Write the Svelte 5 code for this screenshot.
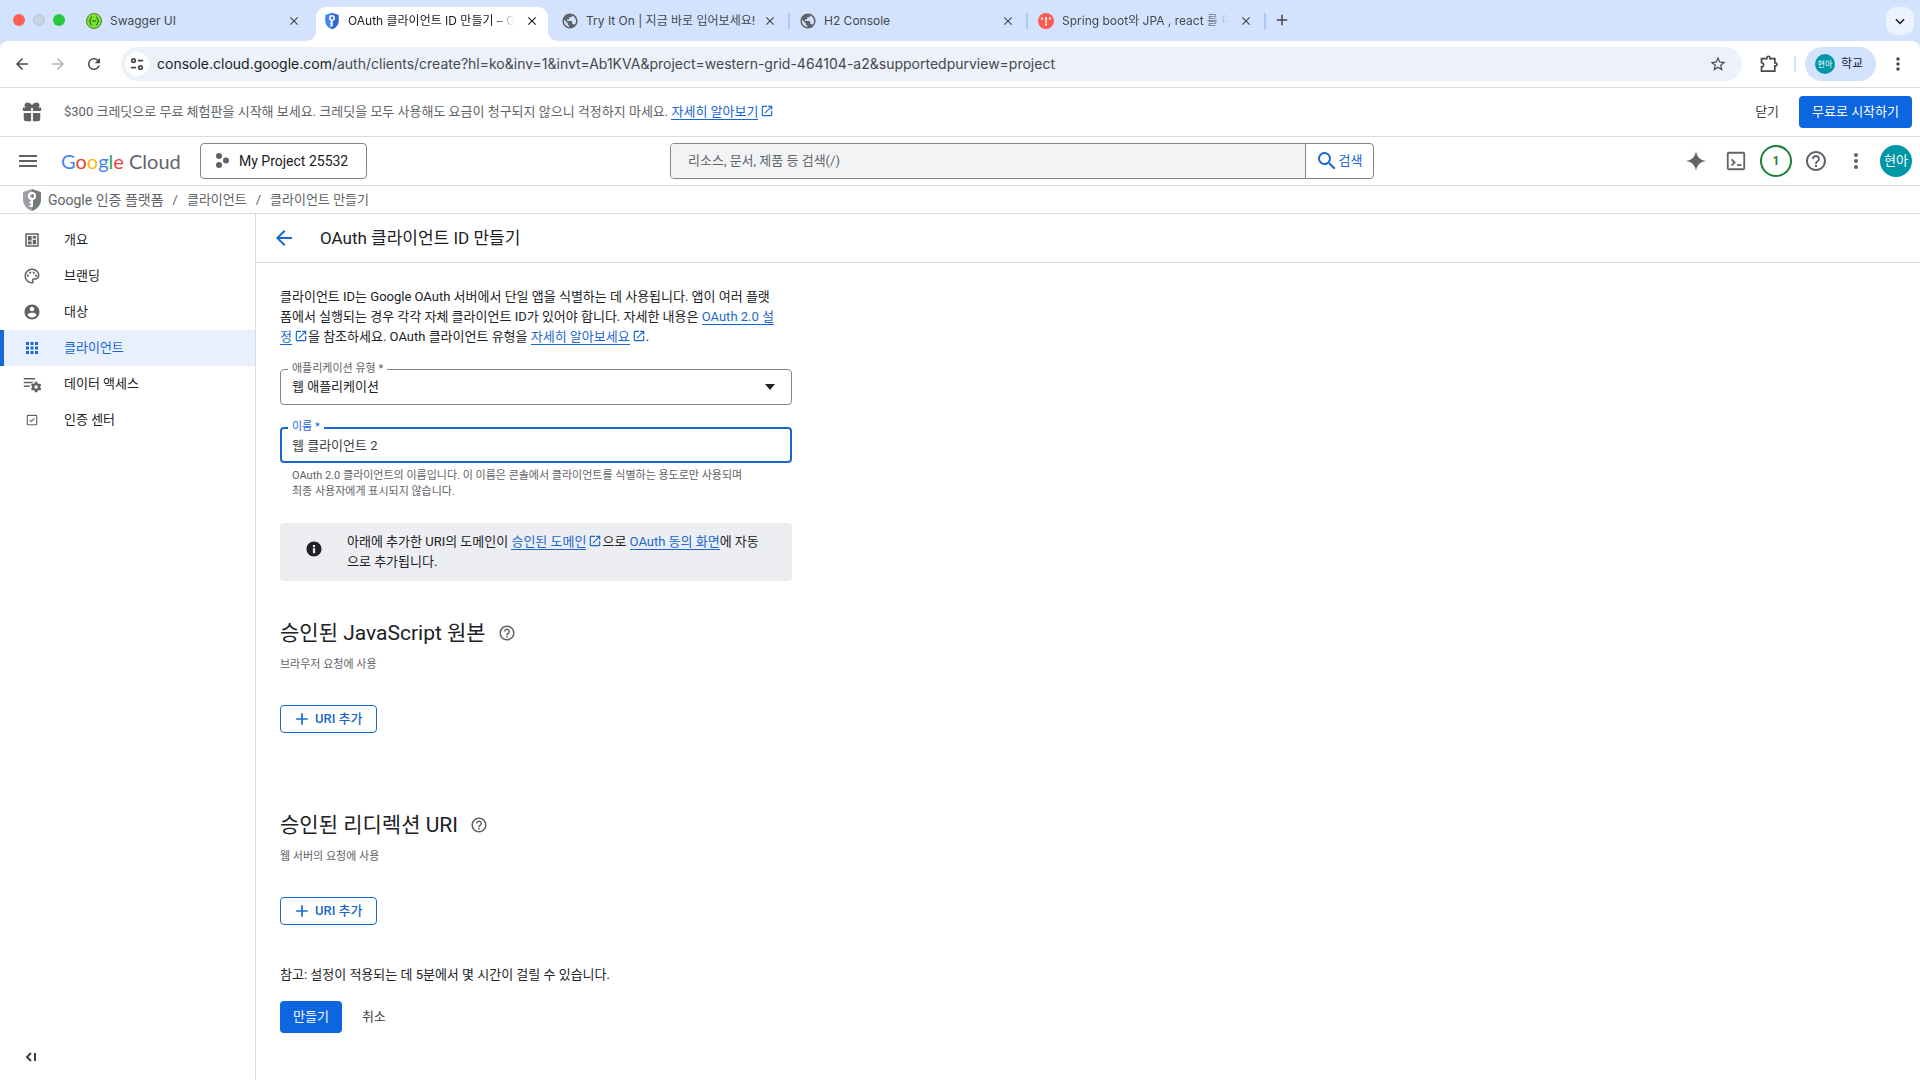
<script>
  const ICONS = {
    back: 'M20 11H7.83l5.59-5.59L12 4l-8 8 8 8 1.41-1.41L7.83 13H20v-2z',
    forward: 'M4 11h12.17l-5.59-5.59L12 4l8 8-8 8-1.41-1.41L16.17 13H4v-2z',
    reload: 'M17.65 6.35A7.96 7.96 0 0 0 12 4a8 8 0 1 0 7.73 10h-2.08A6 6 0 1 1 12 6c1.66 0 3.14.69 4.22 1.78L13 11h7V4l-2.35 2.35z',
    close: 'M19 6.41 17.59 5 12 10.59 6.41 5 5 6.41 10.59 12 5 17.59 6.41 19 12 13.41 17.59 19 19 17.59 13.41 12z',
    add: 'M19 13h-6v6h-2v-6H5v-2h6V5h2v6h6v2z',
    chevron: 'M6 8 12 14l6-6 2 2-8 8-8-8z',
    star: 'M22 9.24l-7.19-.62L12 2 9.19 8.63 2 9.24l5.46 4.73L5.82 21 12 17.27 18.18 21l-1.63-7.03L22 9.24zM12 15.4l-3.76 2.27 1-4.28-3.32-2.88 4.38-.38L12 6.1l1.71 4.04 4.38.38-3.32 2.88 1 4.28L12 15.4z',
    more: 'M12 8c1.1 0 2-.9 2-2s-.9-2-2-2-2 .9-2 2 .9 2 2 2zm0 2c-1.1 0-2 .9-2 2s.9 2 2 2 2-.9 2-2-.9-2-2-2zm0 6c-1.1 0-2 .9-2 2s.9 2 2 2 2-.9 2-2-.9-2-2-2z',
    menu: 'M3 18h18v-2H3v2zm0-5h18v-2H3v2zm0-7v2h18V6H3z',
    search: 'M15.5 14h-.79l-.28-.27A6.47 6.47 0 0 0 16 9.5 6.5 6.5 0 1 0 9.5 16c1.61 0 3.09-.59 4.23-1.57l.27.28v.79l5 4.99L20.49 19l-4.99-5zm-6 0a4.5 4.5 0 1 1 0-9 4.5 4.5 0 0 1 0 9z',
    external: 'M19 19H5V5h7V3H5a2 2 0 0 0-2 2v14a2 2 0 0 0 2 2h14c1.1 0 2-.9 2-2v-7h-2v7zM14 3v2h3.59l-9.83 9.83 1.41 1.41L19 6.41V10h2V3h-7z',
    help: 'M11 18h2v-2h-2v2zm1-16C6.48 2 2 6.48 2 12s4.48 10 10 10 10-4.48 10-10S17.52 2 12 2zm0 18c-4.41 0-8-3.59-8-8s3.59-8 8-8 8 3.59 8 8-3.59 8-8 8zm0-14c-2.21 0-4 1.79-4 4h2c0-1.1.9-2 2-2s2 .9 2 2c0 2-3 1.75-3 5h2c0-2.25 3-2.5 3-5 0-2.21-1.79-4-4-4z',
    info: 'M12 2C6.48 2 2 6.48 2 12s4.48 10 10 10 10-4.48 10-10S17.52 2 12 2zm1.500 15.500h-3V11h3v6.500zm0-8h-3v-3h3v3z',
    globe: 'M12 2C6.48 2 2 6.48 2 12s4.48 10 10 10 10-4.48 10-10S17.52 2 12 2zm-1 17.93c-3.95-.49-7-3.85-7-7.93 0-.62.08-1.21.21-1.79L9 15v1c0 1.1.9 2 2 2v1.93zm6.9-2.54c-.26-.81-1-1.39-1.9-1.39h-1v-3c0-.55-.45-1-1-1H8v-2h2c.55 0 1-.45 1-1V7h2c1.1 0 2-.9 2-2v-.41c2.93 1.19 5 4.06 5 7.41 0 2.08-.8 3.97-2.1 5.39z',
    extension: 'M3 5.500h6.500V4.500a1.800 1.800 0 0 1 3.600 0v1H19v5.200h.7a1.800 1.800 0 0 1 0 3.600H19V20.500H3v-5a2.500 2.500 0 0 0 0-5z',
    gift: 'M2 11V7h3.400A2.800 2.800 0 0 1 8 2c1.700 0 3 1 4 2.600C13 3 14.300 2 16 2a2.800 2.800 0 0 1 2.600 5H22v4h-9V7.500h-2V11zM3 13h8v9H5a2 2 0 0 1-2-2zm10 0h8v7a2 2 0 0 1-2 2h-6z',
    spark: 'M12 0c.9 6.600 4.800 11.100 12 12-7.200.9-11.100 5.400-12 12-.9-6.600-4.800-11.100-12-12 7.200-.9 11.100-5.400 12-12z',
    overview: 'M20 3H4a1 1 0 0 0-1 1v16a1 1 0 0 0 1 1h16a1 1 0 0 0 1-1V4a1 1 0 0 0-1-1zm-1 16H5V5h14v14zM6.500 6.500h5v6h-5zM13 6.500h4.500v3.500H13zM13 11.500h4.500v6H13zM6.500 14h5v3.500h-5z',
    palette: 'M12 22C6.490 22 2 17.510 2 12S6.490 2 12 2s10 4.040 10 9c0 3.310-2.690 6-6 6h-1.770c-.28 0-.5.22-.5.5 0 .12.05.23.13.33.41.47.64 1.060.64 1.670A2.500 2.500 0 0 1 12 22zm0-18c-4.410 0-8 3.590-8 8s3.590 8 8 8c.28 0 .5-.22.5-.5a.54.54 0 0 0-.14-.35c-.41-.46-.63-1.050-.63-1.650a2.500 2.500 0 0 1 2.500-2.500H16c2.210 0 4-1.790 4-4 0-3.860-3.590-7-8-7zM5 11.500a1.500 1.500 0 1 0 3 0 1.500 1.500 0 1 0-3 0zM8 7.500a1.500 1.500 0 1 0 3 0 1.500 1.500 0 1 0-3 0zM13 7.500a1.500 1.500 0 1 0 3 0 1.500 1.500 0 1 0-3 0zM16 11.500a1.500 1.500 0 1 0 3 0 1.500 1.500 0 1 0-3 0z',
    account: 'M12 2C6.48 2 2 6.48 2 12s4.48 10 10 10 10-4.48 10-10S17.52 2 12 2zm0 3c1.66 0 3 1.34 3 3s-1.34 3-3 3-3-1.34-3-3 1.34-3 3-3zm0 14.2c-2.5 0-4.71-1.28-6-3.22.03-1.99 4-3.08 6-3.08 1.99 0 5.97 1.09 6 3.08-1.29 1.94-3.5 3.22-6 3.22z',
    apps: 'M4 8h4V4H4v4zm6 12h4v-4h-4v4zm-6 0h4v-4H4v4zm0-6h4v-4H4v4zm6 0h4v-4h-4v4zm6-10v4h4V4h-4zm-6 4h4V4h-4v4zm6 6h4v-4h-4v4zm0 6h4v-4h-4v4z',
    access: 'M1 4h15v2H1zM1 9h12v2H1zM1 14h8v2H1zM16 9h3l.5 2 1.500.9 2-.6 1.400 2.500-1.500 1.400v1.600l1.500 1.400-1.400 2.500-2-.6-1.500.9-.5 2h-3l-.5-2-1.500-.9-2 .6-1.400-2.500 1.500-1.400v-1.600l-1.500-1.400 1.400-2.500 2 .6 1.500-.9zM17.500 13.700a2.300 2.300 0 1 0 0 4.600 2.300 2.300 0 0 0 0-4.600z',
    verify: 'M17.500 5h-11A1.500 1.500 0 0 0 5 6.500v11A1.500 1.500 0 0 0 6.500 19h11a1.500 1.500 0 0 0 1.500-1.500v-11A1.500 1.500 0 0 0 17.500 5zm0 12.500h-11v-11h11v11zM8.300 12.300l1-1 1.800 1.800 3.700-3.700 1 1-4.700 4.700z',
    shell: 'M20 2H4a2 2 0 0 0-2 2v16a2 2 0 0 0 2 2h16a2 2 0 0 0 2-2V4a2 2 0 0 0-2-2zm0 18H4V4h16v16zM6.500 10.900 7.900 9.500l4 4-4 4-1.400-1.400 2.600-2.600zM13 15.500h5v2h-5z'
  };

  const tabs = [
    { title: 'Swagger UI', icon: 'swagger' },
    { title: 'OAuth 클라이언트 ID 만들기 – Go', icon: 'shield', active: true, faded: true },
    { title: 'Try It On | 지금 바로 입어보세요!', icon: 'globe', divider: true },
    { title: 'H2 Console', icon: 'globe', divider: true },
    { title: 'Spring boot와 JPA , react 를 이', icon: 'velog', divider: true, faded: true }
  ];

  const navItems = [
    { label: '개요', icon: 'overview' },
    { label: '브랜딩', icon: 'palette' },
    { label: '대상', icon: 'account' },
    { label: '클라이언트', icon: 'apps' },
    { label: '데이터 액세스', icon: 'access' },
    { label: '인증 센터', icon: 'verify' }
  ];

  const uriSections = [
    { title: '승인된 JavaScript 원본', hint: '브라우저 요청에 사용' },
    { title: '승인된 리디렉션 URI', hint: '웹 서버의 요청에 사용' }
  ];

  let selected = $state('클라이언트');
  let clientName = $state('웹 클라이언트 2');
  let search = $state('');
</script>

{#snippet icon(name, size = 16)}
  <svg width={size} height={size} viewBox="0 0 24 24" fill="currentColor" fill-rule="evenodd" aria-hidden="true">
    <path d={ICONS[name]} />
  </svg>
{/snippet}

{#snippet shield(size, left, right)}
  <svg width={size} height={size} viewBox="0 0 24 24" aria-hidden="true">
    <path d="M12 1 3 4v8c0 5 4 9.500 9 11z" fill={left} />
    <path d="M12 1l9 3v8c0 5-4 9.500-9 11z" fill={right} />
    <circle cx="12" cy="8" r="3" fill="none" stroke="#fff" stroke-width="2" />
    <path d="M12 11v8M12 14.500H9.500M12 18H9.500" stroke="#fff" stroke-width="2" fill="none" />
  </svg>
{/snippet}

<div class="window">
  <header class="browser">
    <div class="tab-strip">
      <div class="lights">
        <span class="light red"></span>
        <span class="light gray"></span>
        <span class="light green"></span>
      </div>
      {#each tabs as tab}
        <div class="tab" class:active={tab.active} class:divider={tab.divider}>
          {#if tab.icon === 'shield'}
            {@render shield(18, '#4285f4', '#3367d6')}
          {:else if tab.icon === 'swagger'}
            <svg width="18" height="18" viewBox="0 0 18 18" aria-hidden="true">
              <circle cx="9" cy="9" r="7.500" fill="#7be32b" stroke="#4c7f3a" />
              <path d="M7 5C5 5 6 8 4.500 9 6 10 5 13 7 13M11 5c2 0 1 3 2.500 4-1.500 1-.5 4-2.500 4M7 9h4" stroke="#24512f" fill="none" />
            </svg>
          {:else if tab.icon === 'velog'}
            <svg width="18" height="18" viewBox="0 0 18 18" aria-hidden="true">
              <circle cx="9" cy="9" r="8" fill="#ff5a4f" />
              <path d="M9 5.500v8" stroke="#fff" stroke-width="2" stroke-dasharray="2 1" />
              <path d="M4 6.500h10" stroke="#fff" stroke-width="2" stroke-dasharray="2 2" />
            </svg>
          {:else}
            <span class="globe">{@render icon('globe', 18)}</span>
          {/if}
          <span class="tab-title" class:faded={tab.faded}>{tab.title}</span>
          <button class="tab-close" aria-label="탭 닫기">{@render icon('close', 14)}</button>
        </div>
      {/each}
      <button class="new-tab" aria-label="새 탭">{@render icon('add', 18)}</button>
      <button class="tab-search" aria-label="탭 검색">{@render icon('chevron', 14)}</button>
    </div>

    <div class="toolbar">
      <div class="nav-buttons">
        <button aria-label="뒤로">{@render icon('back', 18)}</button>
        <button aria-label="앞으로" disabled>{@render icon('forward', 18)}</button>
        <button aria-label="새로고침">{@render icon('reload', 18)}</button>
      </div>
      <div class="address">
        <button class="site-info" aria-label="사이트 정보">
          <svg width="14" height="14" viewBox="0 0 16 16" fill="none" stroke="currentColor" stroke-width="2" aria-hidden="true">
            <circle cx="4" cy="4" r="2" />
            <path d="M9 4h6M1 12h6" />
            <circle cx="12" cy="12" r="2" />
          </svg>
        </button>
        <span class="url"><b>console.cloud.google.com</b>/auth/clients/create?hl=ko&amp;inv=1&amp;invt=Ab1KVA&amp;project=western-grid-464104-a2&amp;supportedpurview=project</span>
        <button class="star" aria-label="북마크">{@render icon('star', 18)}</button>
      </div>
      <button class="extension" aria-label="확장 프로그램">
        <svg width="20" height="20" viewBox="0 0 24 24" fill="none" stroke="currentColor" stroke-width="2" aria-hidden="true">
          <path d={ICONS.extension} />
        </svg>
      </button>
      <span class="bar"></span>
      <button class="profile"><span class="mini-avatar">현아</span>학교</button>
      <button class="chrome-menu" aria-label="메뉴">{@render icon('more', 20)}</button>
    </div>
  </header>

  <section class="banner">
    <span class="gift">{@render icon('gift', 22)}</span>
    <p>
      $300 크레딧으로 무료 체험판을 시작해 보세요. 크레딧을 모두 사용해도 요금이 청구되지 않으니 걱정하지 마세요.
      <a href="#more">자세히 알아보기</a><span class="ext-icon">{@render icon('external', 14)}</span>
    </p>
    <button class="text-button">닫기</button>
    <button class="primary">무료로 시작하기</button>
  </section>

  <section class="console-bar">
    <div class="bar-left">
      <button class="menu" aria-label="탐색 메뉴">{@render icon('menu', 24)}</button>
      <a class="logo" href="#home"><span class="blue">G</span><span class="crimson">o</span><span class="yellow">o</span><span class="blue">g</span><span class="leaf">l</span><span class="crimson">e</span> Cloud</a>
      <button class="project">
        <svg width="16" height="18" viewBox="0 0 16 18" fill="#5f6368" aria-hidden="true">
          <circle cx="5" cy="4" r="3" />
          <circle cx="12" cy="8.500" r="3" />
          <circle cx="5" cy="13" r="3" />
        </svg>
        My Project 25532
      </button>
    </div>
    <form class="search">
      <input type="text" aria-label="검색" placeholder="리소스, 문서, 제품 등 검색(/)" bind:value={search} />
      <button type="button">{@render icon('search', 24)}검색</button>
    </form>
    <div class="bar-right">
      <button aria-label="Gemini">{@render icon('spark', 20)}</button>
      <button aria-label="Cloud Shell">{@render icon('shell', 22)}</button>
      <button class="notice">1</button>
      <button aria-label="도움말">{@render icon('help', 24)}</button>
      <button aria-label="설정">{@render icon('more', 24)}</button>
      <button class="avatar">현아</button>
    </div>
  </section>

  <nav class="crumbs">
    {@render shield(24, '#9aa0a6', '#757a7f')}
    <a class="product" href="#auth">Google 인증 플랫폼</a>
    <span>/</span>
    <a href="#clients">클라이언트</a>
    <span>/</span>
    <a href="#create">클라이언트 만들기</a>
  </nav>

  <div class="body">
    <aside>
      <ul>
        {#each navItems as item}
          <li>
            <a
              href="#{item.icon}"
              class:selected={selected === item.label}
              onclick={() => (selected = item.label)}
            >
              {@render icon(item.icon, 18)}
              {item.label}
            </a>
          </li>
        {/each}
      </ul>
      <button class="collapse" aria-label="메뉴 접기">
        <svg width="12" height="10" viewBox="0 0 12 10" fill="none" stroke="currentColor" stroke-width="2" aria-hidden="true">
          <path d="M6 1 2 5l4 4M10 1v8" />
        </svg>
      </button>
    </aside>

    <main>
      <div class="page-title">
        <button aria-label="뒤로">{@render icon('back', 24)}</button>
        <h1>OAuth 클라이언트 ID 만들기</h1>
      </div>

      <div class="content">
        <p class="intro">
          클라이언트 ID는 Google OAuth 서버에서 단일 앱을 식별하는 데 사용됩니다. 앱이 여러 플랫<br />폼에서 실행되는 경우 각각 자체 클라이언트 ID가 있어야 합니다. 자세한 내용은 <a href="#setup">OAuth 2.0 설<br />정</a><span class="ext-icon">{@render icon('external', 14)}</span>을 참조하세요. OAuth 클라이언트 유형을 <a href="#types">자세히 알아보세요</a><span class="ext-icon">{@render icon('external', 14)}</span>.
        </p>

        <div class="field">
          <label for="app-type">애플리케이션 유형 *</label>
          <select id="app-type">
            <option>웹 애플리케이션</option>
          </select>
          <svg class="caret" width="10" height="6" viewBox="0 0 10 6" aria-hidden="true"><path d="M0 0h10L5 6z" fill="#202124" /></svg>
        </div>

        <div class="field focused">
          <label for="client-name">이름 *</label>
          <input id="client-name" type="text" bind:value={clientName} />
        </div>
        <p class="helper">
          OAuth 2.0 클라이언트의 이름입니다. 이 이름은 콘솔에서 클라이언트를 식별하는 용도로만 사용되며<br />최종 사용자에게 표시되지 않습니다.
        </p>

        <div class="notice-box">
          {@render icon('info', 18)}
          <p>
            아래에 추가한 URI의 도메인이 <a href="#domains">승인된 도메인</a><span class="ext-icon">{@render icon('external', 14)}</span>으로 <a href="#consent">OAuth 동의 화면</a>에 자동<br />으로 추가됩니다.
          </p>
        </div>

        {#each uriSections as section}
          <section class="uris">
            <h2>{section.title} <span class="help">{@render icon('help', 18)}</span></h2>
            <p>{section.hint}</p>
            <button class="outlined">{@render icon('add', 20)}URI 추가</button>
          </section>
        {/each}

        <p class="note">참고: 설정이 적용되는 데 5분에서 몇 시간이 걸릴 수 있습니다.</p>
        <div class="actions">
          <button class="primary">만들기</button>
          <button class="text-button">취소</button>
        </div>
      </div>
    </main>
  </div>
</div>

<style>
  :global(body) {
    background: #fff;
  }

  .window {
    min-height: 100vh;
    display: flex;
    flex-direction: column;
    color: #202124;
    font-family: Roboto, 'Noto Sans CJK KR', sans-serif;
    font-size: 13px;
    line-height: 20px;
  }

  .window * {
    box-sizing: border-box;
  }

  button {
    display: inline-flex;
    align-items: center;
    justify-content: center;
    padding: 0;
    border: none;
    background: none;
    color: inherit;
    font: inherit;
    cursor: pointer;
  }

  svg {
    display: block;
    flex-shrink: 0;
  }

  p,
  h1,
  h2,
  ul {
    margin: 0;
    padding: 0;
  }

  a {
    color: inherit;
    text-decoration: none;
  }

  /* Browser chrome */
  .browser {
    background: #d3e3fd;
    border-bottom: 1px solid #dadce0;
    font-family: Inter, 'Noto Sans CJK KR', sans-serif;
    font-size: 12px;
    color: #45484d;
  }

  .tab-strip {
    display: flex;
    height: 41px;
    padding: 7px 6px 0 13px;
  }

  .lights {
    display: flex;
    gap: 8px;
    padding: 7px 7px 0 0;
    width: 65px;
  }

  .light {
    width: 12px;
    height: 12px;
    border-radius: 50%;
  }

  .red { background: #ff5f57; }
  .gray { background: #c9d2df; border: 1px solid #b9c3d3; }
  .green { background: #28c840; }

  .tab {
    position: relative;
    flex: 0 1 232px;
    min-width: 0;
    margin-right: 6px;
    padding: 0 9px 6px 7px;
    display: flex;
    align-items: center;
  }

  .tab.active {
    background: #fff;
    border-radius: 10px 10px 0 0;
    color: #202124;
  }

  .tab.active::before,
  .tab.active::after {
    content: '';
    position: absolute;
    bottom: 0;
    width: 10px;
    height: 10px;
  }

  .tab.active::before {
    left: -10px;
    background: radial-gradient(circle at 0 0, transparent 10px, #fff 10px);
  }

  .tab.active::after {
    right: -10px;
    background: radial-gradient(circle at 100% 0, transparent 10px, #fff 10px);
  }

  .tab.divider::after {
    content: '';
    position: absolute;
    right: -4px;
    top: 6px;
    width: 2px;
    height: 16px;
    background: #a8c7fa;
  }

  .globe {
    color: #5f6368;
  }

  .tab-title {
    flex: 1;
    min-width: 0;
    margin: 0 4px 0 7px;
    overflow: hidden;
    white-space: nowrap;
  }

  .tab-title.faded {
    margin-right: 10px;
    mask-image: linear-gradient(to right, #000 86%, transparent);
  }

  .new-tab {
    width: 28px;
    height: 26px;
  }

  .tab-search {
    width: 28px;
    height: 28px;
    margin-left: auto;
    border-radius: 10px;
    background: #edf3fe;
    color: #202124;
  }

  .toolbar {
    display: flex;
    align-items: center;
    height: 46px;
    padding-right: 12px;
    background: #fff;
    border-radius: 8px 8px 0 0;
  }

  .nav-buttons {
    display: flex;
    gap: 18px;
    padding: 0 18px 0 13px;
  }

  .nav-buttons button:disabled {
    color: #b0b3b8;
  }

  .address {
    flex: 1;
    display: flex;
    align-items: center;
    height: 34px;
    padding: 0 15px 0 4px;
    border-radius: 17px;
    background: #edf1f9;
    font-size: 14px;
  }

  .site-info {
    width: 24px;
    height: 24px;
    margin-right: 8px;
    border-radius: 50%;
    background: #fff;
  }

  .url {
    flex: 1;
    white-space: nowrap;
    overflow: hidden;
  }

  .url b {
    font-weight: 400;
    color: #202124;
  }

  .extension {
    margin: 0 15px 0 17px;
  }

  .bar {
    width: 2px;
    height: 16px;
    margin-right: 9px;
    background: #d3e3fd;
  }

  .profile {
    gap: 6px;
    height: 34px;
    padding: 0 13px 0 10px;
    border-radius: 17px;
    background: #d3e3fd;
    color: #14203c;
  }

  .mini-avatar {
    width: 20px;
    height: 20px;
    border-radius: 50%;
    background: #0097a7;
    color: #fff;
    font-size: 8px;
  }

  .chrome-menu {
    margin-left: 12px;
  }

  /* Free trial banner */
  .banner {
    display: flex;
    align-items: center;
    height: 49px;
    padding: 0 8px 0 21px;
    border-bottom: 1px solid #dadce0;
    color: #5f6368;
  }

  .banner p {
    flex: 1;
    margin-left: 21px;
  }

  p a,
  .ext-icon {
    color: #1967d2;
  }

  p a {
    border-bottom: 1px solid #1967d2;
  }

  .ext-icon {
    display: inline-block;
    margin-left: 2px;
    vertical-align: -2px;
  }

  .text-button {
    padding: 0 20px;
    height: 32px;
    color: #3c4043;
  }

  .primary {
    height: 32px;
    padding: 0 13px;
    border-radius: 4px;
    background: #0b66e0;
    color: #fff;
  }

  /* Console header */
  .console-bar {
    display: grid;
    grid-template-columns: 670px minmax(300px, 704px) 1fr;
    align-items: center;
    height: 49px;
    border-bottom: 1px solid #dadce0;
  }

  .bar-left {
    display: flex;
    align-items: center;
    padding-left: 16px;
    color: #5f6368;
  }

  .logo {
    width: 139px;
    margin-left: 21px;
    font-family: Lato, sans-serif;
    font-size: 20px;
    white-space: nowrap;
  }

  .blue { color: #4285f4; }
  .crimson { color: #ea4335; }
  .yellow { color: #fbbc04; }
  .leaf { color: #34a853; }

  .project {
    height: 36px;
    gap: 9px;
    padding: 0 18px 0 13px;
    border: 1px solid #80868b;
    border-radius: 4px;
    color: #202124;
    font-size: 14px;
  }

  .search {
    display: flex;
    height: 36px;
    border: 1px solid #80868b;
    border-radius: 4px;
    overflow: hidden;
  }

  .search input {
    flex: 1;
    min-width: 0;
    padding: 0 17px;
    border: none;
    outline: none;
    background: #f1f3f4;
    font: inherit;
  }

  .search input::placeholder {
    color: #5f6368;
    opacity: 1;
  }

  .search button {
    width: 68px;
    padding-right: 2px;
    border-left: 1px solid #80868b;
    color: #1967d2;
  }

  .bar-right {
    display: flex;
    justify-content: flex-end;
    gap: 8px;
    padding-right: 8px;
    color: #5f6368;
  }

  .bar-right button {
    width: 32px;
    height: 32px;
    border-radius: 50%;
  }

  .bar-right .notice {
    border: 2px solid #188038;
    color: #188038;
    font-weight: 700;
    font-size: 12px;
  }

  .bar-right .avatar {
    background: #0097a7;
    color: #fff;
  }

  .crumbs {
    display: flex;
    align-items: center;
    height: 28px;
    padding-left: 20px;
    border-bottom: 1px solid #dadce0;
    color: #5f6368;
  }

  .crumbs .product {
    margin-left: 4px;
    font-size: 14px;
  }

  .crumbs span {
    margin: 0 9px;
  }

  /* Sidebar */
  .body {
    flex: 1;
    display: flex;
  }

  aside {
    width: 256px;
    flex-shrink: 0;
    display: flex;
    flex-direction: column;
    justify-content: space-between;
    padding: 8px 0 16px;
    border-right: 1px solid #dadce0;
  }

  aside ul {
    list-style: none;
  }

  aside a {
    display: flex;
    align-items: center;
    gap: 23px;
    height: 36px;
    padding-left: 23px;
  }

  aside a :global(svg) {
    color: #5f6368;
  }

  aside a.selected {
    padding-left: 19px;
    border-left: 4px solid #1967d2;
    background: #e8f0fe;
    color: #1967d2;
  }

  aside a.selected :global(svg) {
    color: #1967d2;
  }

  .collapse {
    align-self: flex-start;
    margin-left: 25px;
    height: 14px;
    color: #3c4043;
  }

  /* Main column */
  main {
    flex: 1;
    min-width: 0;
  }

  .page-title {
    display: flex;
    align-items: center;
    gap: 24px;
    height: 49px;
    padding-left: 16px;
    border-bottom: 1px solid #dadce0;
    color: #1967d2;
  }

  h1 {
    color: #202124;
    font-size: 17px;
    font-weight: 400;
    line-height: 24px;
  }

  .content {
    max-width: 560px;
    padding: 24px;
  }

  .intro {
    white-space: nowrap;
  }

  .field {
    position: relative;
    height: 36px;
    margin-top: 22px;
  }

  .field label {
    position: absolute;
    top: -10px;
    left: 8px;
    padding: 0 4px;
    background: #fff;
    color: #5f6368;
    font-size: 11px;
  }

  .field select,
  .field input {
    width: 100%;
    height: 100%;
    padding: 0 11px;
    border: 1px solid #80868b;
    border-radius: 4px;
    outline: none;
    appearance: none;
    background: #fff;
    color: #202124;
    font: inherit;
  }

  .field.focused label {
    color: #1967d2;
  }

  .field.focused input {
    padding: 0 10px 2px;
    border: 2px solid #1967d2;
    color: #3c4043;
  }

  .caret {
    position: absolute;
    top: 15px;
    right: 17px;
    pointer-events: none;
  }

  .helper {
    margin: 5px 12px 0;
    color: #5f6368;
    font-size: 11px;
    line-height: 16px;
    white-space: nowrap;
  }

  .notice-box {
    display: flex;
    align-items: flex-start;
    gap: 24px;
    margin-top: 23px;
    padding: 9px 24px 9px 25px;
    border-radius: 4px;
    background: #eceef2;
    white-space: nowrap;
  }

  .notice-box > :global(svg) {
    margin-top: 8px;
  }

  .uris {
    padding: 36px 0 0;
    height: 192px;
  }

  h2 {
    display: flex;
    align-items: center;
    gap: 12px;
    font-size: 21px;
    font-weight: 400;
    line-height: 32px;
  }

  .help,
  .uris p {
    color: #5f6368;
  }

  .uris p {
    margin-top: 6px;
    font-size: 11px;
    line-height: 20px;
  }

  .outlined {
    height: 28px;
    margin-top: 30px;
    padding: 0 13px 0 11px;
    gap: 3px;
    border: 1px solid #1967d2;
    border-radius: 4px;
    color: #1967d2;
    font-weight: 500;
  }

  .actions {
    display: flex;
    margin-top: 16px;
  }
</style>
